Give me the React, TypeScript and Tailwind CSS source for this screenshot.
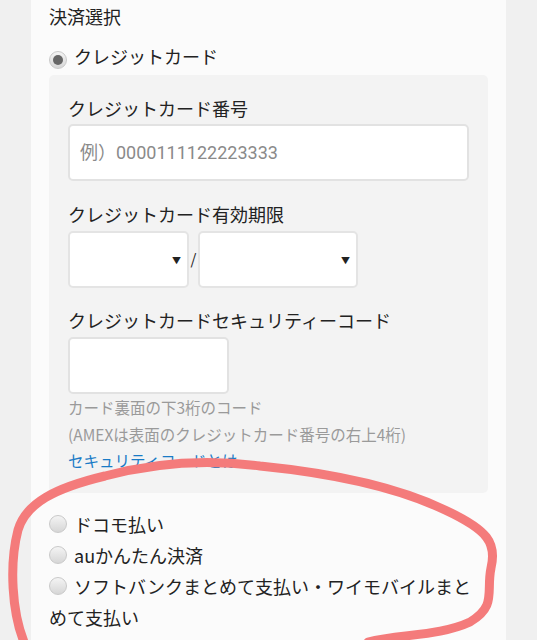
import React from "react";

const Radio = ({ checked = false }: { checked?: boolean }) => (
  <span className="inline-flex items-center justify-center w-[18px] h-[18px] mr-[7px] rounded-full border border-[#c9c9c9] bg-gradient-to-b from-[#f4f4f4] to-[#d6d6d6] align-[-1px]">
    {checked && <span className="block w-[10px] h-[10px] rounded-full bg-[#666]" />}
  </span>
);

const Select = ({ width }: { width: string }) => (
  <div className={`relative h-[57px] ${width} bg-white border-2 border-[#e4e4e4] rounded-[5px]`}>
    <span className="absolute right-[6px] top-[21px] text-[9px] text-[#222]">▼</span>
  </div>
);

const options = ["ドコモ払い", "auかんたん決済", "ソフトバンクまとめて支払い・ワイモバイルまとめて支払い"];

const App = () => {
  return (
    <div className="relative h-[640px] overflow-hidden bg-[#f0f0f0] font-['Noto_Sans_CJK_JP',sans-serif] text-[#222]">
      <div className="mx-[31px] h-full bg-[#fbfbfb] px-[18px] pt-[3px] text-[18px]">
        <div className="h-[27px] leading-[27px]">決済選択</div>
        <div className="mt-[11px] h-[30px] leading-[30px]">
          <Radio checked />
          クレジットカード
        </div>
        <div className="mt-[4px] bg-[#f3f3f3] rounded-[5px] px-[19px] pt-[20px] pb-[19px]">
          <div className="leading-[27px]">クレジットカード番号</div>
          <div className="mt-[2px] h-[57px] bg-white border-2 border-[#e2e2e2] rounded-[5px] flex items-center px-[10px] font-['Roboto','Noto_Sans_CJK_JP',sans-serif] text-[18px] text-[#8a8a8a]">
            例）0000111122223333
          </div>
          <div className="mt-[20px] leading-[27px]">クレジットカード有効期限</div>
          <div className="mt-[3px] flex items-center">
            <Select width="w-[121px]" />
            <span className="w-[9px] text-center text-[15px]">/</span>
            <Select width="w-[160px]" />
          </div>
          <div className="mt-[19px] leading-[27px]">クレジットカードセキュリティーコード</div>
          <div className="mt-[3px] h-[57px] w-[161px] bg-white border-2 border-[#e2e2e2] rounded-[5px]" />
          <div className="text-[15.5px] leading-[26.5px] text-[#9a9a9a]">
            <div>カード裏面の下3桁のコード</div>
            <div>(AMEXは表面のクレジットカード番号の右上4桁)</div>
            <div className="text-[#1a7bc6]">セキュリティコードとは</div>
          </div>
        </div>
        <div className="mt-[16px] leading-[31.3px]">
          {options.map((o) => (
            <div key={o}>
              <Radio />
              {o}
            </div>
          ))}
        </div>
      </div>
      <svg className="absolute inset-0 pointer-events-none" width="537" height="640" viewBox="0 0 537 640">
        <path
          d="M24 642 C12 612, 9 565, 18 530 C26 503, 55 488, 105 476 C150 464, 200 458, 260 466 C330 473, 395 486, 445 510 C488 530, 497 543, 491 568 C486 592, 497 606, 470 622 C440 636, 400 634, 368 642"
          fill="none"
          stroke="#f47b7b"
          strokeWidth="9"
          strokeLinecap="round"
          strokeLinejoin="round"
        />
      </svg>
    </div>
  );
};

export default App;
